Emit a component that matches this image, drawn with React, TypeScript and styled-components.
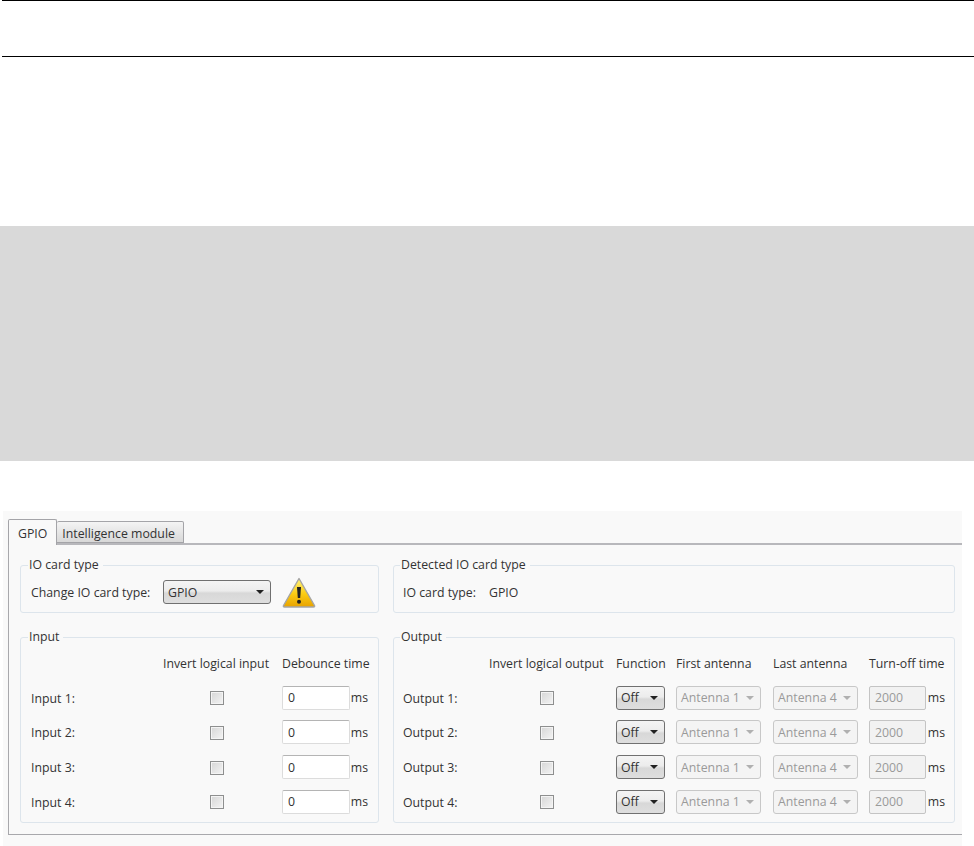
import React from "react";
import styled, { createGlobalStyle } from "styled-components";

const Global = createGlobalStyle`
  html, body { margin: 0; padding: 0; background: #fff; overflow: hidden; }
  body { font-family: "Open Sans", "Noto Sans", sans-serif; font-size: 12.3px; color: #333; }
`;
const Page = styled.div`
  width: 974px;
  height: 846px;
  display: flex;
  flex-direction: column;
`;
const HeaderRules = styled.div`
  height: 55px;
  margin-left: 2px;
  border-top: 1px solid #000;
  border-bottom: 1px solid #000;
`;
const Band = styled.div`
  height: 235px;
  margin-top: 169px;
  background: #d9d9d9;
`;
const Panel = styled.div`
  width: 959px;
  margin: 50px 0 0 3px;
  padding: 8px 0 0 5px;
  box-sizing: border-box;
  height: 335px;
  background: #f9f9f9;
`;
const TabStrip = styled.div`
  display: flex;
  align-items: flex-end;
  height: 24px;
`;
const Tab = styled.div<{ $active?: boolean }>`
  box-sizing: border-box;
  height: ${(p) => (p.$active ? "26px" : "22px")};
  margin-bottom: ${(p) => (p.$active ? "-2px" : "0")};
  padding: ${(p) => (p.$active ? "5px 9px 0" : "3px 8px 0 5px")};
  line-height: 17px;
  border: 1px solid #a4a4a8;
  border-bottom: ${(p) => (p.$active ? "none" : "1px solid #a4a4a8")};
  border-left: ${(p) => (p.$active ? "1px solid #a4a4a8" : "none")};
  border-radius: 2px 2px 0 0;
  background: ${(p) => (p.$active ? "#f9f9f9" : "linear-gradient(#f4f4f4, #d8d8d8)")};
  position: relative;
  z-index: ${(p) => (p.$active ? 1 : 0)};
`;
const TabBody = styled.div`
  box-sizing: border-box;
  height: 292px;
  padding: 13px 0 0 11px;
  border-left: 1px solid #a8a8ac;
  border-bottom: 1px solid #a8a8ac;
  border-top: 2px solid #b8b8bc;
  display: grid;
  grid-template-columns: 359px 562px;
  grid-template-rows: 55px 193px;
  column-gap: 14px;
  row-gap: 17px;
`;
const Group = styled.fieldset<{ $inset: number }>`
  margin: 0;
  min-width: 0;
  box-sizing: border-box;
  padding: 0 9px 0 ${(p) => p.$inset}px;
  border: 1px solid #dde5ec;
  border-radius: 3px;
`;
const GroupTitle = styled.legend`
  margin-left: -3px;
  padding: 0 4px 0 1px;
  line-height: 14px;
`;
const CardRow = styled.div`
  display: flex;
  align-items: center;
  height: 30px;
  margin-top: 5px;
`;
const CardLabel = styled.span<{ $w: number }>`
  width: ${(p) => p.$w}px;
  flex: none;
`;
const IoGrid = styled.div<{ $columns: string; $gap: number }>`
  display: grid;
  grid-template-columns: ${(p) => p.$columns};
  column-gap: ${(p) => p.$gap}px;
  row-gap: 10.7px;
  padding-top: 12px;
  align-items: center;
`;
const Head = styled.div`
  line-height: 16px;
  white-space: nowrap;
  margin-bottom: 3px;
`;
const RowLabel = styled.span`
  padding-top: 1px;
`;
const CheckCell = styled.div`
  display: flex;
  justify-content: center;
  padding-top: 1px;
`;
const Check = styled.input.attrs({ type: "checkbox" })`
  appearance: none;
  margin: 0;
  width: 14px;
  height: 14px;
  border: 1px solid #8e8f8f;
  box-sizing: border-box;
  background: linear-gradient(135deg, #d6d6d6, #f4f4f4);
  box-shadow: inset 0 0 0 1px #f4f4f4;
`;
const TimeCell = styled.div`
  display: flex;
  align-items: center;
  justify-content: space-between;
`;
const Field = styled.input<{ $w: number }>`
  box-sizing: border-box;
  width: ${(p) => p.$w}px;
  height: 24px;
  padding: 0 5px;
  border: 1px solid #dcdcdc;
  border-top-color: #b4b4b4;
  border-radius: 2px;
  background: #fff;
  font: inherit;
  color: #333;
  outline: none;
  &:disabled {
    background: #f2f2f2;
    color: #9a9a9a;
    border-color: #c4c4c4;
  }
`;
const Dropdown = styled.div<{ $w: number; $disabled?: boolean }>`
  box-sizing: border-box;
  width: ${(p) => p.$w}px;
  height: 24px;
  padding: 0 6px 0 4px;
  display: flex;
  align-items: center;
  justify-content: space-between;
  white-space: nowrap;
  border: 1px solid ${(p) => (p.$disabled ? "#c8c8c8" : "#707070")};
  border-radius: 3px;
  color: ${(p) => (p.$disabled ? "#9a9a9a" : "#333")};
  background: ${(p) =>
    p.$disabled ? "#f4f4f4" : "linear-gradient(#f4f4f4 0%, #ececec 45%, #d8d8d8 55%, #dedede 100%)"};
`;
const Caret = styled.i<{ $disabled?: boolean }>`
  width: 0;
  height: 0;
  border-left: 4px solid transparent;
  border-right: 4px solid transparent;
  border-top: 4px solid ${(p) => (p.$disabled ? "#b0b0b0" : "#222")};
`;
const WarningSlot = styled.span`
  display: flex;
  margin-left: 11px;
`;

const WarningIcon = () => (
  <svg width="34" height="31" viewBox="0 0 34 31">
    <defs>
      <linearGradient id="warnFill" x1="0" y1="0" x2="0" y2="1">
        <stop offset="0" stopColor="#fff27a" />
        <stop offset="0.55" stopColor="#fbcb12" />
        <stop offset="1" stopColor="#e8a200" />
      </linearGradient>
    </defs>
    <path d="M17 1.5 L32.5 28.5 Q33 30 31.5 30 L2.5 30 Q1 30 1.5 28.5 Z" fill="url(#warnFill)" stroke="#a5a5a5" strokeWidth="1.4" strokeLinejoin="round" />
    <path d="M15 10 L19 10 L18.2 21 L15.8 21 Z" fill="#222" />
    <circle cx="17" cy="24.8" r="2" fill="#222" />
  </svg>
);

const Select = ({ value, width, disabled }: { value: string; width: number; disabled?: boolean }) => (
  <Dropdown $w={width} $disabled={disabled}>
    {value}
    <Caret $disabled={disabled} />
  </Dropdown>
);

const inputs = [1, 2, 3, 4];

export default function App() {
  return (
    <Page>
      <Global />
      <HeaderRules />
      <Band />
      <Panel>
        <TabStrip>
          <Tab $active>GPIO</Tab>
          <Tab>Intelligence module</Tab>
        </TabStrip>
        <TabBody>
          <Group $inset={10}>
            <GroupTitle>IO card type</GroupTitle>
            <CardRow>
              <CardLabel $w={132}>Change IO card type:</CardLabel>
              <Select value="GPIO" width={108} />
              <WarningSlot>
                <WarningIcon />
              </WarningSlot>
            </CardRow>
          </Group>
          <Group $inset={9}>
            <GroupTitle>Detected IO card type</GroupTitle>
            <CardRow>
              <CardLabel $w={86}>IO card type:</CardLabel>
              <span>GPIO</span>
            </CardRow>
          </Group>
          <Group $inset={10}>
            <GroupTitle>Input</GroupTitle>
            <IoGrid $columns="120px 107px 86px" $gap={12}>
              <span />
              <Head>Invert logical input</Head>
              <Head>Debounce time</Head>
              {inputs.map((n) => (
                <React.Fragment key={n}>
                  <RowLabel>Input {n}:</RowLabel>
                  <CheckCell>
                    <Check />
                  </CheckCell>
                  <TimeCell>
                    <Field $w={68} defaultValue="0" />
                    ms
                  </TimeCell>
                </React.Fragment>
              ))}
            </IoGrid>
          </Group>
          <Group $inset={9}>
            <GroupTitle>Output</GroupTitle>
            <IoGrid $columns="75px 116px 49px 86px 85px 76px" $gap={11}>
              <span />
              <Head>Invert logical output</Head>
              <Head>Function</Head>
              <Head>First antenna</Head>
              <Head>Last antenna</Head>
              <Head>Turn-off time</Head>
              {inputs.map((n) => (
                <React.Fragment key={n}>
                  <RowLabel>Output {n}:</RowLabel>
                  <CheckCell>
                    <Check />
                  </CheckCell>
                  <Select value="Off" width={49} />
                  <Select value="Antenna 1" width={85} disabled />
                  <Select value="Antenna 4" width={85} disabled />
                  <TimeCell>
                    <Field $w={57} defaultValue="2000" disabled />
                    ms
                  </TimeCell>
                </React.Fragment>
              ))}
            </IoGrid>
          </Group>
        </TabBody>
      </Panel>
    </Page>
  );
}
